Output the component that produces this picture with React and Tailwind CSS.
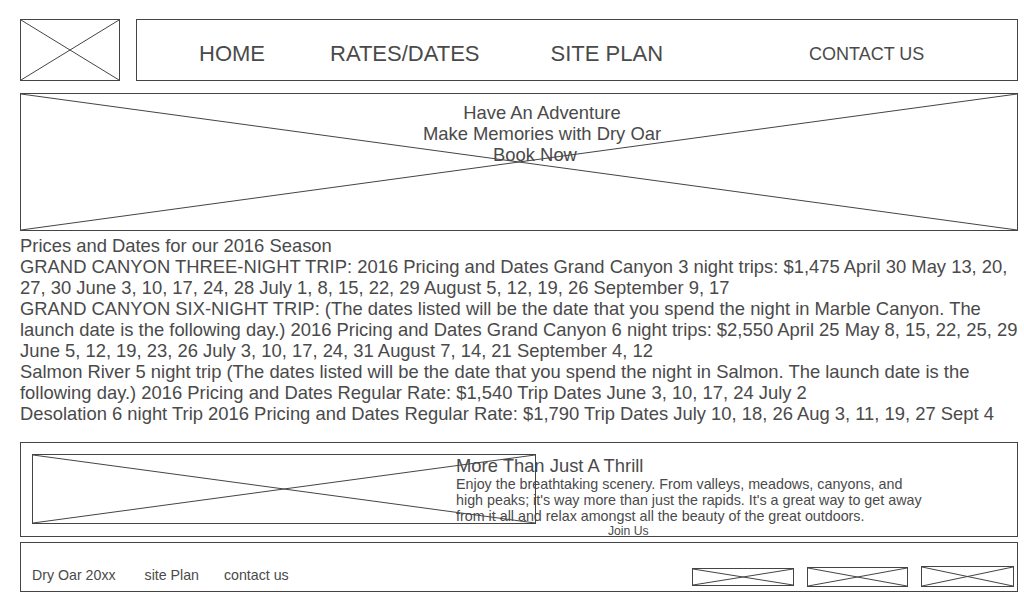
import React from 'react';

function Placeholder({ className = '', children }) {
  return (
    <div className={`relative border border-[#444] ${className}`}>
      <svg className="absolute inset-0 w-full h-full" preserveAspectRatio="none" viewBox="0 0 100 100">
        <line x1="0" y1="0" x2="100" y2="100" stroke="#444" strokeWidth="1" vectorEffect="non-scaling-stroke" />
        <line x1="0" y1="100" x2="100" y2="0" stroke="#444" strokeWidth="1" vectorEffect="non-scaling-stroke" />
      </svg>
      {children}
    </div>
  );
}

export default function App() {
  return (
    <div className="w-[1024px] h-[600px] bg-white pl-5 pr-[6px] pt-[19px] text-[#4a4a4a] overflow-hidden" style={{ fontFamily: '"Liberation Sans", Arial, sans-serif' }}>
      {/* Header */}
      <div className="flex gap-4 h-[62px]">
        <Placeholder className="w-[100px] h-[62px] shrink-0" />
        <nav className="flex-1 border border-[#444] flex items-center pl-[62px] pt-[8px]">
          <span className="text-[22px] leading-none">HOME</span>
          <span className="text-[22px] leading-none ml-[65px]">RATES/DATES</span>
          <span className="text-[22px] leading-none ml-[71px]">SITE PLAN</span>
          <span className="text-[18px] leading-none ml-[146px]">CONTACT US</span>
        </nav>
      </div>

      {/* Hero */}
      <Placeholder className="mt-3 h-[138px]">
        <div className="relative flex flex-col items-center pt-[8px] pl-[46px] text-[18.4px] leading-[21px]">
          <span>Have An Adventure</span>
          <span>Make Memories with Dry Oar</span>
          <span className="-ml-[14px]">Book Now</span>
        </div>
      </Placeholder>

      {/* Rates text */}
      <div className="mt-[4px] text-[18.4px] leading-[21px]">
        <p>Prices and Dates for our 2016 Season</p>
        <p>GRAND CANYON THREE-NIGHT TRIP: 2016 Pricing and Dates Grand Canyon 3 night trips: $1,475 April 30 May 13, 20, 27, 30 June 3, 10, 17, 24, 28 July 1, 8, 15, 22, 29 August 5, 12, 19, 26 September 9, 17</p>
        <p>GRAND CANYON SIX-NIGHT TRIP: (The dates listed will be the date that you spend the night in Marble Canyon. The launch date is the following day.) 2016 Pricing and Dates Grand Canyon 6 night trips: $2,550 April 25 May 8, 15, 22, 25, 29 June 5, 12, 19, 23, 26 July 3, 10, 17, 24, 31 August 7, 14, 21 September 4, 12</p>
        <p>Salmon River 5 night trip (The dates listed will be the date that you spend the night in Salmon. The launch date is the following day.) 2016 Pricing and Dates Regular Rate: $1,540 Trip Dates June 3, 10, 17, 24 July 2</p>
        <p>Desolation 6 night Trip 2016 Pricing and Dates Regular Rate: $1,790 Trip Dates July 10, 18, 26 Aug 3, 11, 19, 27 Sept 4</p>
      </div>

      {/* Feature card */}
      <div className="mt-[18px] h-[95px] border border-[#444] flex pl-[11px] pt-[11px]">
        <Placeholder className="w-[504px] h-[70px] shrink-0" />
        <div className="-ml-[80px] relative w-[474px] pt-px">
          <div className="text-[18.4px] leading-[21px]">More Than Just A Thrill</div>
          <p className="text-[14.3px] leading-[16px]">Enjoy the breathtaking scenery. From valleys, meadows, canyons, and high peaks; it's way more than just the rapids. It's a great way to get away from it all and relax amongst all the beauty of the great outdoors.</p>
          <div className="text-[12.2px] leading-[14px] ml-[152px]">Join Us</div>
        </div>
      </div>

      {/* Footer */}
      <div className="mt-[5px] h-[50px] border border-[#444] flex items-end pl-[11px] pr-[3px] pb-[4px]">
        <div className="flex text-[14.2px] leading-[16px] mb-[4px]">
          <span>Dry Oar 20xx</span>
          <span className="ml-[29px]">site Plan</span>
          <span className="ml-[25px]">contact us</span>
        </div>
        <div className="ml-auto flex items-end gap-[13px]">
          <Placeholder className="w-[102px] h-[18px] mb-px" />
          <Placeholder className="w-[101px] h-[20px]" />
          <Placeholder className="w-[93px] h-[21px]" />
        </div>
      </div>
    </div>
  );
}
